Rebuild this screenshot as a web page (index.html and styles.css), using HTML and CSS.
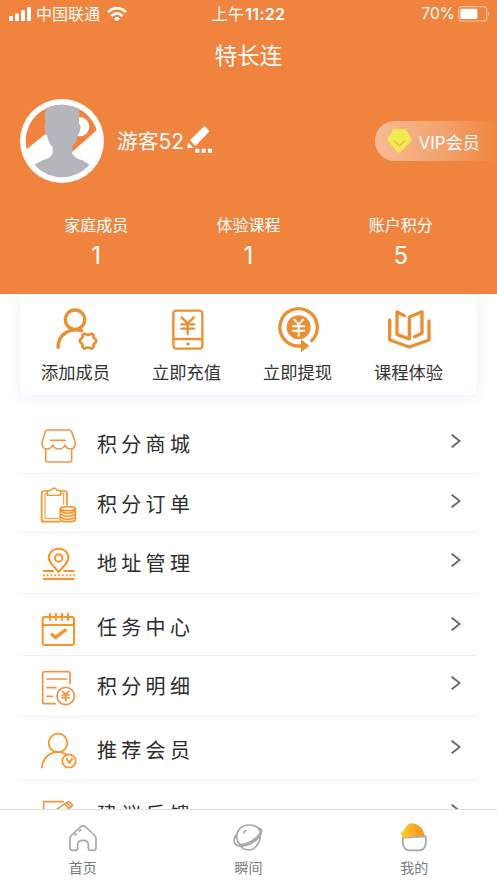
FILE: index.html
```html
<!DOCTYPE html>
<html lang="zh-CN">
<head>
<meta charset="utf-8">
<title>特长连</title>
<link rel="stylesheet" href="styles.css">
</head>
<body>
<div class="app">
  <header class="hero">
    <div class="status">
      <div class="status-left">
        <svg class="signal" viewBox="0 0 22 14" fill="#fff"><rect y="9" width="4" height="5" rx="1"/><rect x="6" y="6.5" width="4" height="7.5" rx="1"/><rect x="12" y="3" width="4" height="11" rx="1"/><rect x="18" width="4" height="14" rx="1"/></svg>
        <span>中国联通</span>
        <svg class="wifi" viewBox="0 0 60 44" fill="none" stroke="#fff" stroke-width="8"><path d="M3 15Q30-8 57 15M13 27Q30 12 47 27"/><path d="M20 35Q30 27 40 35L30 44Z" fill="#fff" stroke="none"/></svg>
      </div>
      <div class="clock">上午<b>11:22</b></div>
      <div class="status-right">
        <span>70%</span>
        <svg class="battery" viewBox="0 0 96 48"><rect x="2" y="2" width="84" height="43" rx="10" fill="none" stroke="#f8bf9b" stroke-width="3.5"/><rect x="7" y="8" width="51" height="31" rx="5" fill="#fff"/><path d="M90 17Q97 24 90 31Z" fill="#f8bf9b"/></svg>
      </div>
    </div>
    <h1 class="title">特长连</h1>
    <div class="profile">
      <svg class="avatar" viewBox="0 0 252 252">
        <defs><clipPath id="face"><circle cx="126" cy="126" r="109"/></clipPath></defs>
        <circle cx="126" cy="126" r="126" fill="#fff"/>
        <g clip-path="url(#face)">
          <path fill="#f0843f" d="M0 0H252V76L232 92L157 158L140 152L76 105L18 152L0 166Z"/>
          <circle cx="179" cy="83" r="29" fill="#fff"/>
          <path fill="#b4b6bc" d="M77 29Q72 18 88 15H164Q180 15 178 32L177 74Q184 78 180 94Q178 104 174 108Q170 129 157 143V164Q164 178 188 184L209 197Q178 240 126 240Q74 240 43 197L68 184Q94 178 98 162V145Q84 129 81 108Q73 100 74 85Q74 75 77 73Q72 51 77 29Z"/>
        </g>
      </svg>
      <span class="name">游客52</span>
      <svg class="pencil" viewBox="0 0 78 84" fill="#fff"><path d="M52 0L68 16L25 60L9 43ZM3 49L19 65L1 66ZM25 68H37V80H25ZM44 68H56V80H44ZM63 68H75V80H63Z"/></svg>
      <div class="vip">
        <svg class="gem" viewBox="0 0 74 70"><path d="M19 2H55L72 32L40 66Q36 70 32 66L2 32Z" fill="#f0ec50" stroke="#f0ec50" stroke-width="3" stroke-linejoin="round"/><path d="M21 34L37 49L53 34" fill="none" stroke="#f0b458" stroke-width="4"/></svg>
        <span>VIP会员</span>
      </div>
    </div>
    <div class="stats">
      <div><p>家庭成员</p><strong>1</strong></div>
      <div><p>体验课程</p><strong>1</strong></div>
      <div><p>账户积分</p><strong>5</strong></div>
    </div>
  </header>

  <main class="content">
    <section class="actions">
      <div class="action">
        <svg viewBox="0 0 150 150" class="bold"><circle cx="72" cy="44" r="29"/><path d="M21 127Q23 87 59 76Q76 72 92 77"/><path stroke-width="8" stroke-linejoin="round" d="M100 86Q111 93 122 86L127 89Q126 101 135 104V111Q126 116 127 127L121 131Q111 124 101 131L95 127Q96 115 87 111V104Q96 101 95 89Z"/></svg>
        <span>添加成员</span>
      </div>
      <div class="action">
        <svg viewBox="0 0 150 150" class="bold thin"><rect x="34" y="17" width="87" height="114" rx="9"/><path d="M34 102H121M59 37L77 56L95 37M77 56V87M58 58H96M58 71H96"/><circle cx="78" cy="117" r="5" class="solid"/></svg>
        <span>立即充值</span>
      </div>
      <div class="action">
        <svg viewBox="0 0 150 150" class="bold"><path d="M116 107A56 56 0 1 0 77 123H88"/><circle cx="77" cy="67" r="36" class="solid"/><path class="solid" d="M84 103L109 122L84 142Z"/><path stroke="#fff" stroke-width="6" d="M64 44L77 59L90 44M77 60V92M60 64H94M60 77H94"/></svg>
        <span>立即提现</span>
      </div>
      <div class="action">
        <svg viewBox="0 0 150 150" class="bold"><path d="M17 45V105L76 126L135 105V48M61 32L39 21V88L76 102V36L114 20V85L92 95"/></svg>
        <span>课程体验</span>
      </div>
    </section>

    <ul class="menu">
      <li class="item first">
        <svg viewBox="0 0 120 120" class="icon soft"><path d="M29 18H93Q98 18 101 23L112 56Q112 74 99 75Q84 75 81 63Q76 75 62 75Q49 75 44 63Q39 75 26 75Q11 73 12 56L22 23Q24 18 29 18ZM23 76V108Q23 114 29 114H95Q101 114 101 108V76M37 49H82"/></svg>
        <span>积分商城</span><svg class="chevron" viewBox="0 0 30 42"><path d="M2 2L26 21L2 40"/></svg>
      </li>
      <li class="item">
        <svg viewBox="0 0 120 120" class="icon mid"><path d="M28 21H17Q11 21 11 27V107Q11 113 17 113H65M68 21H81Q87 21 87 27V62"/><path class="fine" d="M30 28H21V103H61M68 28H77V61"/><path stroke-width="4" d="M28 34V21L40 18Q48 6 56 18L68 21V34Z"/><path class="coins" d="M67 74V107Q67 113 89 113Q112 113 112 107V74"/><ellipse cx="89" cy="74" rx="22" ry="6"/><path d="M67 82Q89 94 112 82M67 91Q89 103 112 91M67 100Q89 112 112 100"/></svg>
        <span>积分订单</span><svg class="chevron" viewBox="0 0 30 42"><path d="M2 2L26 21L2 40"/></svg>
      </li>
      <li class="item tall">
        <svg viewBox="0 0 120 120" class="icon strong"><path d="M62 87L40 62Q26 43 38 28Q48 17 62 17Q76 17 86 28Q97 43 84 62Z"/><circle cx="62" cy="45" r="11"/><path d="M17 84H45M79 84H107M17 108H107"/><path d="M15 97H111" stroke-dasharray="5 6.4" stroke-linecap="butt"/></svg>
        <span>地址管理</span><svg class="chevron" viewBox="0 0 30 42"><path d="M2 2L26 21L2 40"/></svg>
      </li>
      <li class="item low">
        <svg viewBox="0 0 120 120" class="icon strong"><rect x="14" y="30" width="94" height="84" rx="6"/><path d="M14 54H108M36 20V39M54 20V39M72 20V39M90 20V39"/><path d="M39 80L52 91L85 67" stroke-width="10" stroke-linecap="butt"/></svg>
        <span>任务中心</span><svg class="chevron" viewBox="0 0 30 42"><path d="M2 2L26 21L2 40"/></svg>
      </li>
      <li class="item tall">
        <svg viewBox="0 0 120 120" class="icon soft mid"><path d="M96 53V23Q96 17 90 17H20Q14 17 14 23V107Q14 113 20 113H51M27 39H86M27 65H54M27 91H43"/><circle cx="83" cy="90" r="26"/><path d="M74 76L83 86L92 76M83 86V105M72 87H94M72 95H94"/></svg>
        <span>积分明细</span><svg class="chevron" viewBox="0 0 30 42"><path d="M2 2L26 21L2 40"/></svg>
      </li>
      <li class="item low last">
        <svg viewBox="0 0 120 120" class="icon mid"><circle cx="60" cy="39" r="28"/><path d="M12 113Q14 88 31 75Q58 57 84 73"/><circle cx="93" cy="93" r="20"/><path d="M86 86L94 99L102 86" stroke-width="6"/></svg>
        <span>推荐会员</span><svg class="chevron" viewBox="0 0 30 42"><path d="M2 2L26 21L2 40"/></svg>
      </li>
      <li class="item low">
        <svg viewBox="0 0 120 120" class="icon soft"><path d="M76 23H17V108H94V64M49 67L52 49L86 25Q94 20 104 34L69 61ZM79 30L94 43M85 26L100 39"/></svg>
        <span>建议反馈</span><svg class="chevron" viewBox="0 0 30 42"><path d="M2 2L26 21L2 40"/></svg>
      </li>
    </ul>
  </main>

  <nav class="tabs">
    <div class="tab">
      <svg viewBox="0 0 96 90"><path d="M14 36L40 12Q48 5 56 12L82 36Q87 41 87 47V75Q87 82 80 82H71Q65 82 64 76V64Q63 52 48 52Q33 52 32 64V76Q32 82 25 82H16Q9 82 9 75V47Q9 41 14 36ZM22 37L29 31M35 25L42 19"/></svg>
      <span>首页</span>
    </div>
    <div class="tab">
      <svg viewBox="0 0 96 90"><path d="M82 21C77 10 65 6 51 6C29 6 14 21 14 41C14 51 18 59 25 65C44 64 71 51 84 31C85 27 84 24 82 21ZM81 16C93 17 92 32 77 47C55 68 17 77 8 60C4 52 7 42 16 32M22 65C36 87 63 84 74 68C82 57 85 44 85 35M34 31Q37 25 43 21"/></svg>
      <span>瞬间</span>
    </div>
    <div class="tab">
      <svg viewBox="0 0 96 90"><defs><linearGradient id="cap"><stop stop-color="#fcd02b"/><stop offset="1" stop-color="#fd8b22"/></linearGradient></defs><path fill="#fff" d="M15 44Q12 60 17 70Q22 82 36 82H62Q76 82 81 70Q86 58 83 40Z"/><path d="M9 30Q17 25 23 13Q30 1 44 1Q70 3 81 38Q50 37 20 44Q8 42 9 30Z" fill="url(#cap)" stroke="none"/></svg>
      <span>我的</span>
    </div>
  </nav>
</div>
</body>
</html>
```

FILE: styles.css
```css
* { box-sizing: border-box; }

body {
  margin: 0;
  font-family: Inter, "Noto Sans CJK SC", sans-serif;
  background: #fff;
}

p, h1, ul { margin: 0; padding: 0; }

svg { display: block; flex: none; }

.app {
  display: flex;
  flex-direction: column;
  height: 883px;
  overflow: hidden;
}

.hero {
  flex: none;
  height: 294px;
  background: #f0843f;
  color: #fff;
  font-weight: 400;
}

.status {
  display: grid;
  grid-template-columns: 1fr auto 1fr;
  align-items: center;
  height: 28px;
  padding: 0 7px 0 9px;
  font-size: 16px;
  line-height: 28px;
}

.status-left, .status-right { display: flex; align-items: center; }
.status-left span { margin-left: 5px; }
.status-right { justify-content: flex-end; font-size: 15.5px; }
.signal { width: 22px; height: 14px; }
.wifi { width: 20px; height: 14.5px; margin-left: 7px; }
.battery { width: 32px; height: 16px; margin-left: 3px; }
.clock { margin-left: -2px; letter-spacing: .3px; }
.clock b { margin-left: 1px; font-weight: 600; }

.title {
  height: 56px;
  font-size: 22.5px;
  font-weight: 400;
  line-height: 56px;
  text-align: center;
}

.profile {
  display: flex;
  align-items: center;
  height: 84px;
  margin-top: 15px;
  padding-left: 20px;
}

.avatar { width: 84px; height: 84px; }
.name { width: 70px; margin-left: 13px; padding-top: 1px; font-size: 20.8px; line-height: 30px; white-space: nowrap; }
.pencil { width: 26px; height: 28px; margin: -2px 0 0; }

.vip {
  display: flex;
  align-items: center;
  width: 122px;
  height: 40px;
  margin-left: auto;
  padding-left: 11.5px;
  border-radius: 20px 0 0 20px;
  background: linear-gradient(90deg, #f7bc97, #f2a06a 60%, #f0863f);
  font-size: 17px;
}

.gem { width: 25px; height: 24px; margin-right: 7px; }

.stats {
  display: grid;
  grid-template-columns: repeat(3, 1fr);
  margin-top: 29px;
  padding: 0 20px;
  text-align: center;
}

.stats p { font-size: 16px; line-height: 26px; }
.stats strong { display: block; font-size: 24px; font-weight: 400; line-height: 36px; }

.content { flex: 1; min-height: 0; overflow: hidden; }

.actions {
  display: grid;
  grid-template-columns: repeat(4, 1fr);
  height: 101px;
  margin: 0 20px;
  padding: 11px 13px 0 0;
  border-radius: 6px;
  box-shadow: 0 2px 14px rgba(80, 120, 220, .12);
}

.action { display: flex; flex-direction: column; align-items: center; }
.action svg { width: 50px; height: 50px; }
.action span { margin-top: 5px; font-size: 17.3px; line-height: 26px; color: #333; }

.bold { fill: none; stroke: #e99035; stroke-width: 10; stroke-linecap: round; stroke-linejoin: round; }
.thin { stroke-width: 7; }
.solid { fill: #e99035; stroke: none; }

.menu { margin: 20px 20px 0; list-style: none; }

.item {
  display: flex;
  align-items: flex-start;
  height: 59px;
  padding: 10px 16px 0 18px;
  border-bottom: 1px solid #f3eeee;
}

.item.first { padding-top: 9px; }
.item.tall { height: 61px; }
.item.low { height: 62px; padding-top: 13px; }
.item.last { height: 64px; }

.item span {
  flex: 1;
  margin: 1px 0 0 19px;
  font-size: 20px;
  line-height: 40px;
  letter-spacing: 4.3px;
  color: #2c2c2c;
}

.icon {
  width: 40px;
  height: 40px;
  fill: none;
  stroke: #fb9426;
  stroke-width: 4.8;
  stroke-linecap: round;
  stroke-linejoin: round;
}

.soft { stroke: #ef9546; }
.mid { stroke-width: 5.2; }
.strong { stroke-width: 6.2; }
.fine { stroke-width: 3; }
.coins { fill: #fff; }

.chevron {
  width: 10px;
  height: 14px;
  margin-top: 10px;
  fill: none;
  stroke: #666;
  stroke-width: 5.5;
}

.tabs {
  display: grid;
  grid-template-columns: repeat(3, 1fr);
  flex: none;
  height: 74px;
  border-top: 1px solid #dedede;
  background: #fff;
}

.tab { display: flex; flex-direction: column; align-items: center; padding-top: 13px; }
.tab svg { width: 32px; height: 30px; fill: none; stroke: #a5aaa6; stroke-width: 5; stroke-linejoin: round; }
.tab span { margin-top: 4px; font-size: 14px; line-height: 22px; color: #777a7f; }
```
